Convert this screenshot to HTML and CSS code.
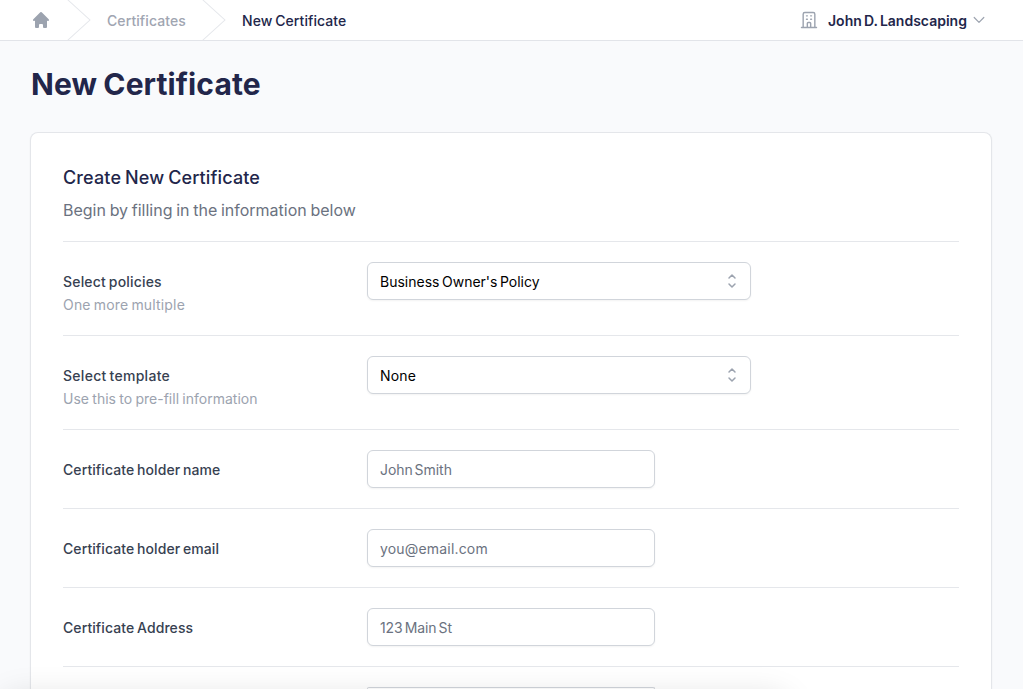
FILE: index.html
```html
<!DOCTYPE html>
<html lang="en">
<head>
<meta charset="utf-8">
<title>New Certificate</title>
<link rel="stylesheet" href="styles.css">
</head>
<body>
<header class="topbar">
  <nav class="crumbs">
    <a class="home" aria-label="Home"><svg width="20" height="20" viewBox="0 0 20 20" fill="currentColor"><path d="M10.707 2.293a1 1 0 00-1.414 0l-7 7a1 1 0 001.414 1.414L4 10.414V17a1 1 0 001 1h2a1 1 0 001-1v-2a1 1 0 011-1h2a1 1 0 011 1v2a1 1 0 001 1h2a1 1 0 001-1v-6.586l.293.293a1 1 0 001.414-1.414l-7-7z"/></svg></a>
    <svg class="sep" width="24" height="40" viewBox="0 0 24 44" preserveAspectRatio="none" fill="currentColor"><path d="M.293 0l22 22-22 22h1.414l22-22-22-22H.293z"/></svg>
    <a class="crumb"><span class="t-certs">Certificates</span></a>
    <svg class="sep" width="24" height="40" viewBox="0 0 24 44" preserveAspectRatio="none" fill="currentColor"><path d="M.293 0l22 22-22 22h1.414l22-22-22-22H.293z"/></svg>
    <a class="crumb current"><span class="t-new">New Certificate</span></a>
  </nav>
  <div class="account">
    <svg class="building" width="20" height="20" viewBox="0 0 24 24" fill="none" stroke="currentColor" stroke-width="1.7" stroke-linecap="round" stroke-linejoin="round"><path d="M19 21V5a2 2 0 00-2-2H7a2 2 0 00-2 2v16m14 0h2m-2 0h-5m-9 0H3m2 0h5M9 7h1m-1 4h1m4-4h1m-1 4h1m-5 10v-5a1 1 0 011-1h2a1 1 0 011 1v5m-4 0h4"/></svg>
    <span class="account-name">John D. Landscaping</span>
    <svg class="chevron" width="12" height="8" viewBox="0 0 12 8" fill="none" stroke="currentColor" stroke-width="1.2" stroke-linecap="round" stroke-linejoin="round"><path d="M1.2 1.5L6 6.3l4.8-4.8"/></svg>
  </div>
</header>
<main class="page">
  <h1 class="title">New Certificate</h1>
  <section class="card">
    <div class="intro">
      <h2 class="heading">Create New Certificate</h2>
      <p class="lead">Begin by filling in the information below</p>
    </div>
    <div class="row">
      <div class="label"><span class="t-policies">Select policies</span><small class="t-multiple">One more multiple</small></div>
      <div class="field select"><span class="t-business">Business Owner's Policy</span><svg width="20" height="20" viewBox="0 0 20 20" fill="none" stroke="currentColor" stroke-width="1.5" stroke-linecap="round" stroke-linejoin="round"><path d="M7 7l3-3 3 3m0 6l-3 3-3-3"/></svg></div>
    </div>
    <div class="row">
      <div class="label"><span class="t-template">Select template</span><small class="t-prefill">Use this to pre-fill information</small></div>
      <div class="field select"><span class="t-none">None</span><svg width="20" height="20" viewBox="0 0 20 20" fill="none" stroke="currentColor" stroke-width="1.5" stroke-linecap="round" stroke-linejoin="round"><path d="M7 7l3-3 3 3m0 6l-3 3-3-3"/></svg></div>
    </div>
    <div class="row">
      <div class="label"><span class="t-holder">Certificate holder name</span></div>
      <div class="field"><span class="t-smith">John Smith</span></div>
    </div>
    <div class="row">
      <div class="label"><span class="t-holder">Certificate holder email</span></div>
      <div class="field"><span class="t-you">you@email.com</span></div>
    </div>
    <div class="row">
      <div class="label"><span class="t-holder">Certificate Address</span></div>
      <div class="field"><span class="t-main">123 Main St</span></div>
    </div>
    <div class="row last">
      <div class="label"></div>
      <div class="field"></div>
    </div>
  </section>
</main>
<div class="overlay"><div class="dock-shadow"></div></div>
</body>
</html>
```
FILE: styles.css
```css
* { box-sizing: border-box; }
html, body { height: 100%; }
body {
  display: flex;
  flex-direction: column;
  margin: 0;
  overflow: hidden;
  background: #f9fafc;
  color: #22264a;
  font-family: Inter, "Liberation Sans", sans-serif;
  font-size: 14px;
  line-height: 20px;
}
svg { display: block; flex: none; }
.topbar {
  display: flex;
  flex: none;
  justify-content: space-between;
  height: 41px;
  padding: 0 38px 0 31px;
  background: #fff;
  border-bottom: 1px solid #e2e4e9;
}
.crumbs, .account { display: flex; align-items: center; white-space: nowrap; }
.home { color: #9ca3af; }
.sep { color: #e5e7eb; margin-left: 16px; }
.crumb { display: flex; width: 79px; margin-left: 16px; padding-top: 1px; font-weight: 500; color: #a0a5b1; }
.current { width: auto; color: #22264a; }
.building { color: #9ca3af; margin-right: 9px; }
.account-name { width: 139px; padding-top: 1px; font-weight: 600; word-spacing: -1.3px; }
.chevron { color: #9ca3af; margin-left: 6px; }
.page {
  display: flex;
  flex: 1;
  flex-direction: column;
  min-height: 0;
  padding: 23px 31px 0 30px;
}
.title { flex: none; margin: 0 0 28px 1px; font-size: 30px; line-height: 40px; font-weight: 700; white-space: nowrap; letter-spacing: .1px; word-spacing: -1px; }
.card {
  flex: 1;
  min-height: 0;
  overflow: hidden;
  padding: 32px 32px 0;
  background: #fff;
  border: 1px solid #e4e6ea;
  border-bottom: 0;
  border-radius: 8px 8px 0 0;
  box-shadow: 0 1px 2px rgba(0, 0, 0, .05);
}
.intro { height: 76px; padding-top: 1px; white-space: nowrap; }
.heading { margin: 0; font-size: 18px; line-height: 24px; font-weight: 500; letter-spacing: .13px; word-spacing: -1px; }
.lead { margin: 7px 0 0; font-size: 16px; line-height: 26px; color: #6b7280; word-spacing: -.8px; }
.row {
  display: grid;
  grid-template-columns: 304px 1fr;
  padding: 20px 0;
  border-top: 1px solid #e5e7eb;
}
.last { padding-bottom: 0; }
.last .field { height: 2px; border-bottom: 0; border-radius: 6px 6px 0 0; }
.label { display: flex; flex-direction: column; align-items: flex-start; padding-top: 10px; font-weight: 500; color: #374151; white-space: nowrap; }
.label small { margin-top: 3px; font-size: 14px; font-weight: 400; color: #9ca3af; }
.field {
  display: flex;
  align-items: center;
  justify-content: space-between;
  width: 288px;
  height: 38px;
  padding: 0 12px;
  border: 1px solid #d1d5db;
  border-radius: 6px;
  background: #fff;
  box-shadow: 0 1px 2px rgba(0, 0, 0, .05);
  color: #6b7280;
  white-space: nowrap;
}
.field span { padding-top: 2px; }
.select { width: 384px; padding-right: 8px; color: #000; }
.select svg { color: #9ca3af; }
.t-certs { letter-spacing: .08px; }
.t-new { letter-spacing: .07px; word-spacing: -1px; }
.t-policies { letter-spacing: .18px; word-spacing: -1px; }
.t-multiple { letter-spacing: .17px; word-spacing: -1px; }
.t-template { letter-spacing: .28px; word-spacing: -1px; }
.t-prefill { word-spacing: -.6px; }
.t-holder { letter-spacing: .08px; word-spacing: -1px; }
.t-business { word-spacing: -1.4px; }
.t-none { letter-spacing: .2px; }
.t-smith { word-spacing: -2px; letter-spacing: -.05px; }
.t-you { letter-spacing: .18px; }
.t-main { word-spacing: -1.5px; letter-spacing: -.15px; }
.overlay {
  position: fixed;
  inset: 0;
  overflow: hidden;
  pointer-events: none;
}
.dock-shadow {
  position: absolute;
  left: 0;
  bottom: -60px;
  width: 790px;
  height: 53px;
  border-radius: 20px;
  box-shadow: 0 0 32px rgba(0, 0, 0, .13);
}
```
